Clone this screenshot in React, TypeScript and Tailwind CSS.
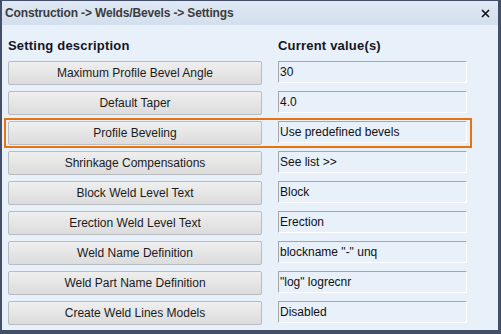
import React from "react";

const rows: [string, string][] = [
  ["Maximum Profile Bevel Angle", "30"],
  ["Default Taper", "4.0"],
  ["Profile Beveling", "Use predefined bevels"],
  ["Shrinkage Compensations", "See list >>"],
  ["Block Weld Level Text", "Block"],
  ["Erection Weld Level Text", "Erection"],
  ["Weld Name Definition", 'blockname "-" unq'],
  ["Weld Part Name Definition", '"log" logrecnr'],
  ["Create Weld Lines Models", "Disabled"],
];

export default function App() {
  return (
    <div
      className="w-[501px] h-[334px] bg-[#434e68] pl-[2px] pt-[1px] pr-[3px] pb-[4px] flex flex-col"
      style={{ fontFamily: '"Liberation Sans", Arial, sans-serif' }}
    >
      <div className="h-[24px] shrink-0 bg-gradient-to-b from-[#dfe8f4] to-[#d3dfee] flex items-center justify-between pl-[3px] pr-[8px]">
        <span className="text-[12px] font-bold text-[#3b3b3b] tracking-[-0.15px]">
          Construction -&gt; Welds/Bevels -&gt; Settings
        </span>
        <svg width="9" height="9" viewBox="0 0 9 9" className="mt-[1px]">
          <path d="M1 1 L8 8 M8 1 L1 8" stroke="#111" strokeWidth="1.6" />
        </svg>
      </div>
      <div className="flex-1 bg-[#e8f0fa] pl-[6px] pt-[11px]">
        <div className="flex h-[19px] items-center text-[13px] font-bold text-[#15151f] tracking-[0.2px]">
          <div className="w-[270px]">Setting description</div>
          <div>Current value(s)</div>
        </div>
        <div className="mt-[6px] flex flex-col gap-[6px]">
          {rows.map(([label, value], i) => (
            <div key={label} className="relative flex gap-[16px] h-[24px]">
              {i === 2 && (
                <div className="absolute left-[-4px] top-[-3px] w-[468px] h-[30px] border-2 border-[#e5740f] pointer-events-none" />
              )}
              <div className="w-[254px] h-[24px] rounded-[2px] border border-[#b9bcc0] bg-gradient-to-b from-[#efefef] to-[#dcdcdc] flex items-center justify-center text-[12px] text-[#1b1b1b]">
                {label}
              </div>
              <div className="w-[189px] h-[22px] border-t border-l border-[#a4a6a9] border-r-white border-b-white border-r border-b pl-[1px] pt-[1px] text-[12px] text-[#111] leading-[18px] whitespace-pre">
                {value}
              </div>
            </div>
          ))}
        </div>
      </div>
    </div>
  );
}
